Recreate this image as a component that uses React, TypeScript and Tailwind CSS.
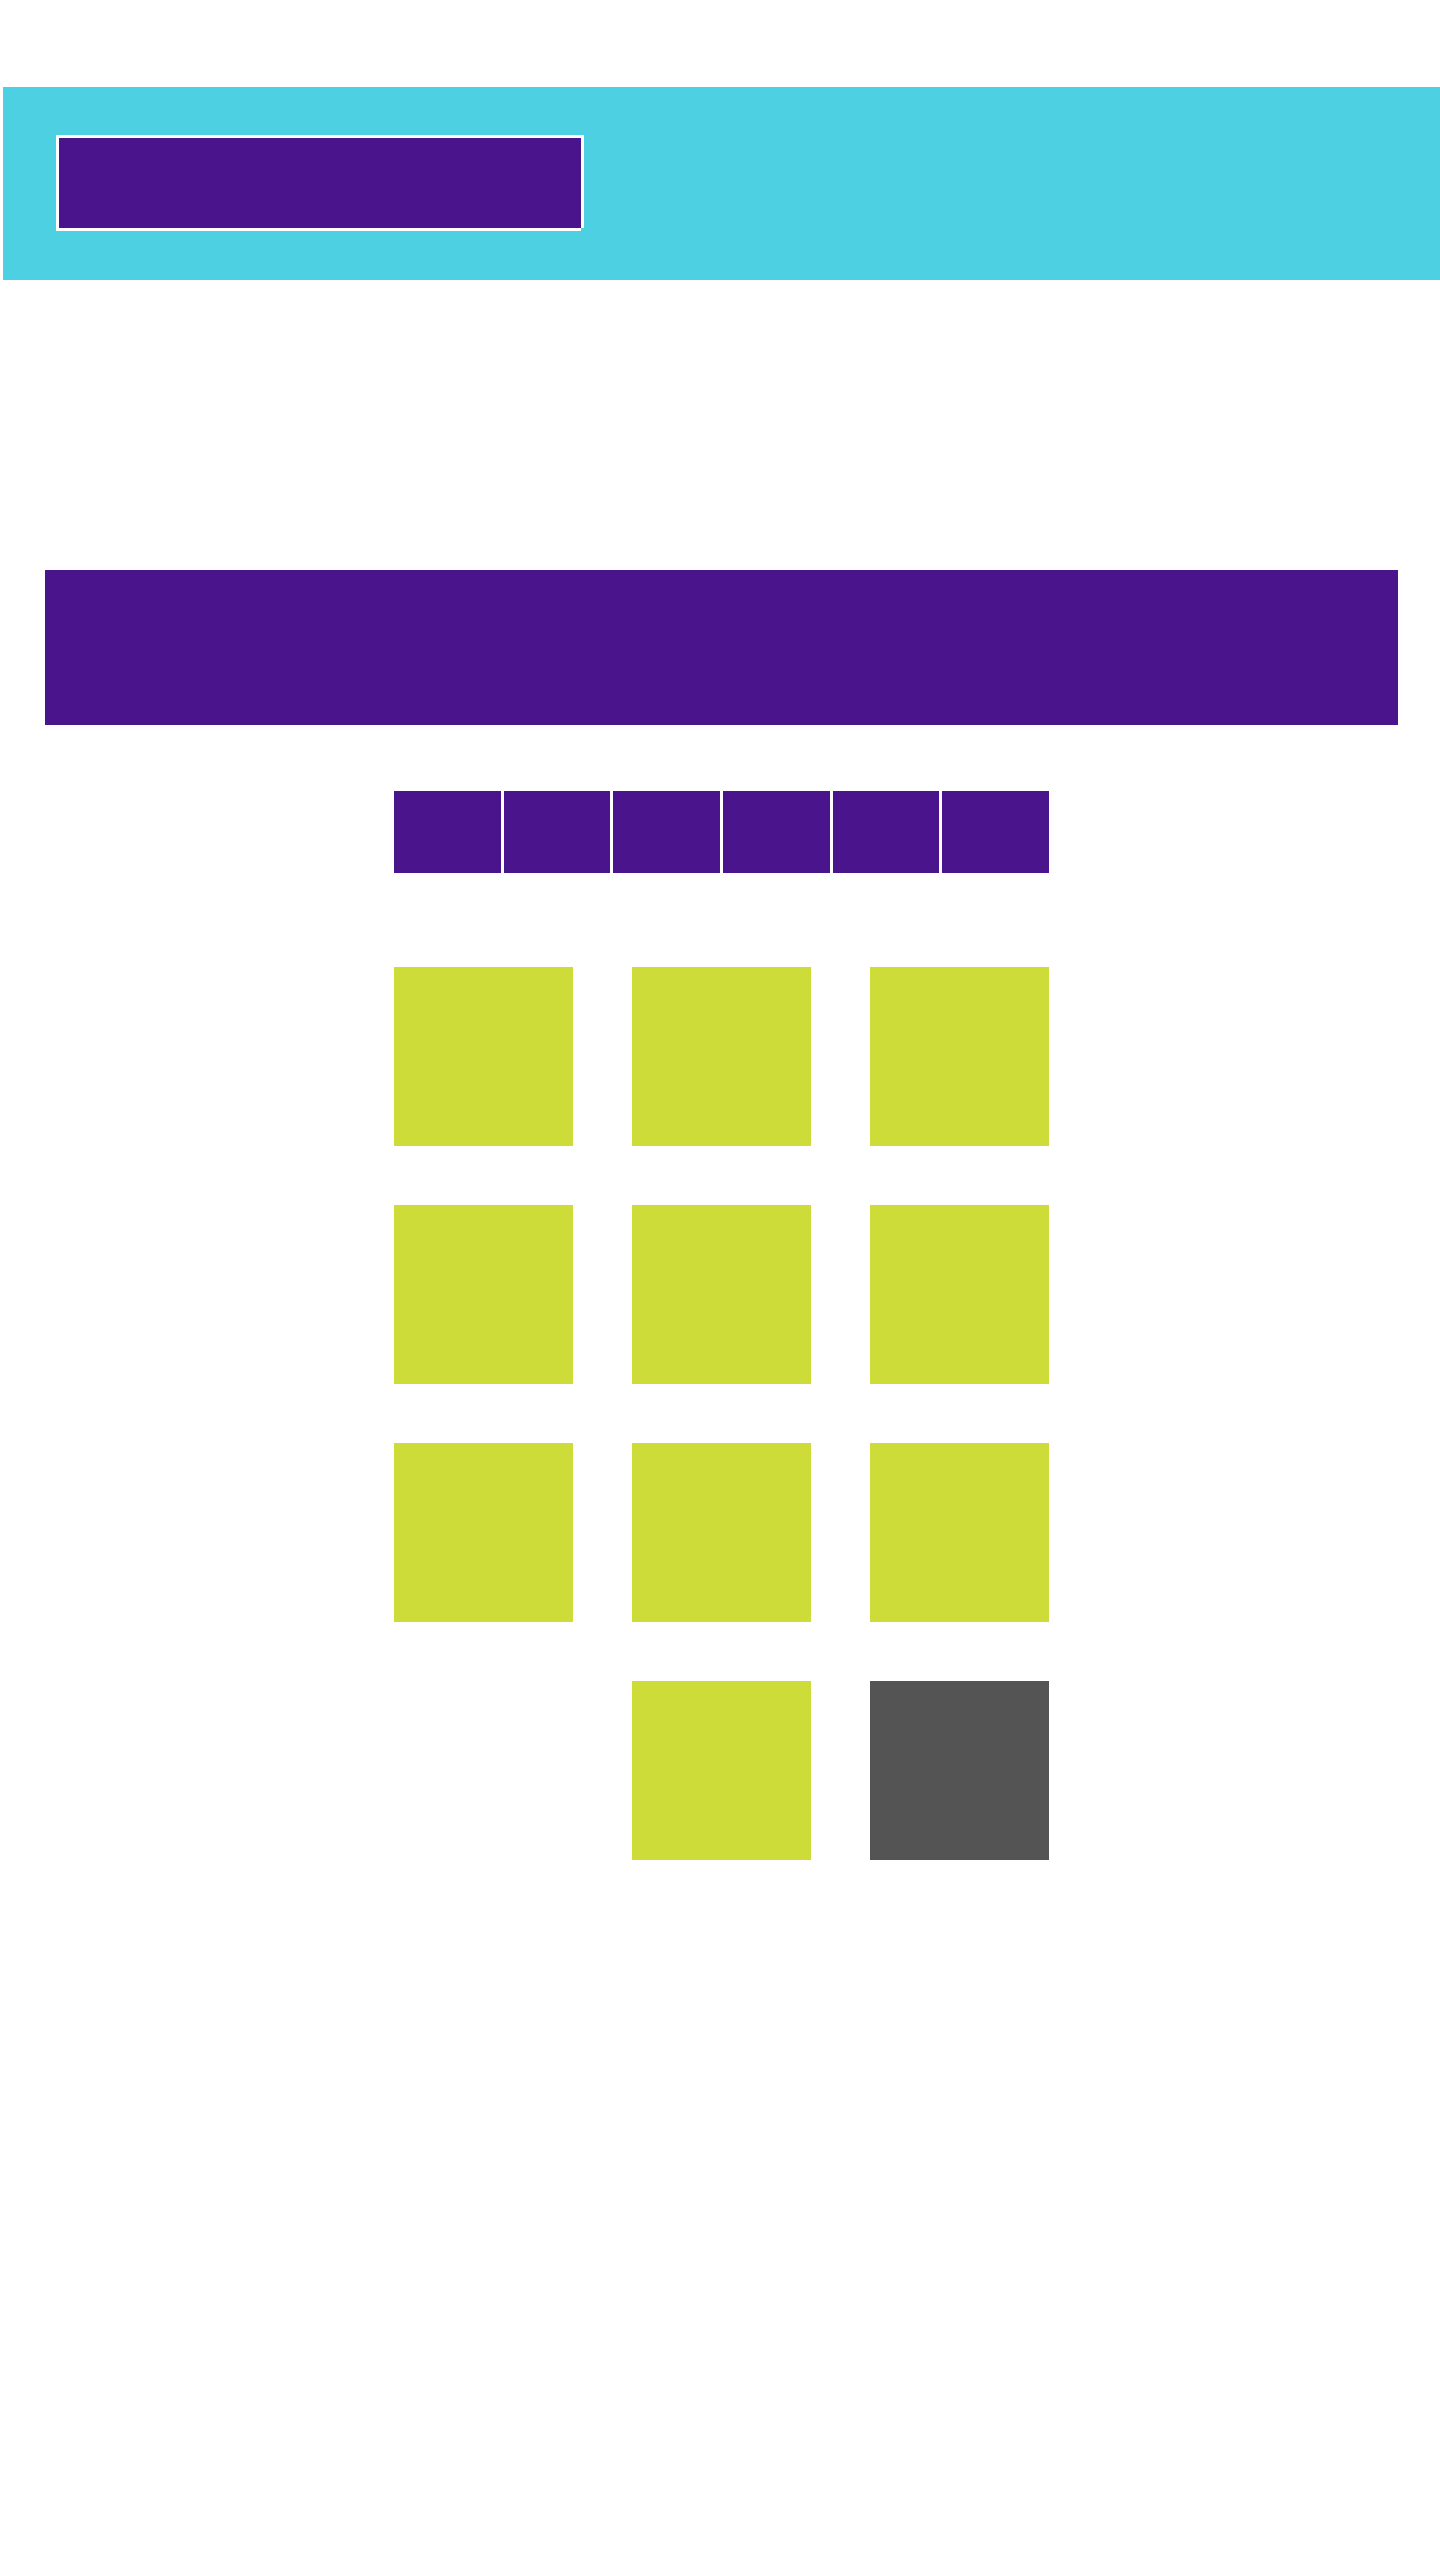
import React from "react";

export default function App() {
  const cells = [
    "lime", "lime", "lime",
    "lime", "lime", "lime",
    "lime", "lime", "lime",
    "empty", "lime", "gray",
  ];
  return (
    <div className="min-h-[2560px] w-[1440px] bg-white pt-[87px]">
      <header className="ml-[3px] h-[193px] bg-[#4DD0E1] pl-[53px] pt-[48px]">
        <div className="w-[528px] border-l-[3px] border-r-[3px] border-t-[3px] border-white">
          <div className="h-[90px] w-[522px] bg-[#4A148C] shadow-[-3px_3px_0_0_#ffffff,0_3px_0_0_#ffffff]" />
        </div>
      </header>

      <section className="ml-[45px] mt-[290px] h-[155px] w-[1353px] bg-[#4A148C]" />

      <nav className="ml-[394px] mt-[66px] flex w-[655px] gap-[3px]">
        {Array.from({ length: 6 }).map((_, i) => (
          <div key={i} className="h-[82px] flex-1 bg-[#4A148C]" />
        ))}
      </nav>

      <main className="ml-[394px] mt-[94px] grid w-[655px] grid-cols-[179px_179px_179px] gap-[59px]">
        {cells.map((c, i) =>
          c === "empty" ? (
            <div key={i} className="h-[179px] w-[179px]" />
          ) : c === "gray" ? (
            <div key={i} className="h-[179px] w-[179px] bg-[#545454]" />
          ) : (
            <div key={i} className="h-[179px] w-[179px] bg-[#CEDC3A]" />
          )
        )}
      </main>
    </div>
  );
}
